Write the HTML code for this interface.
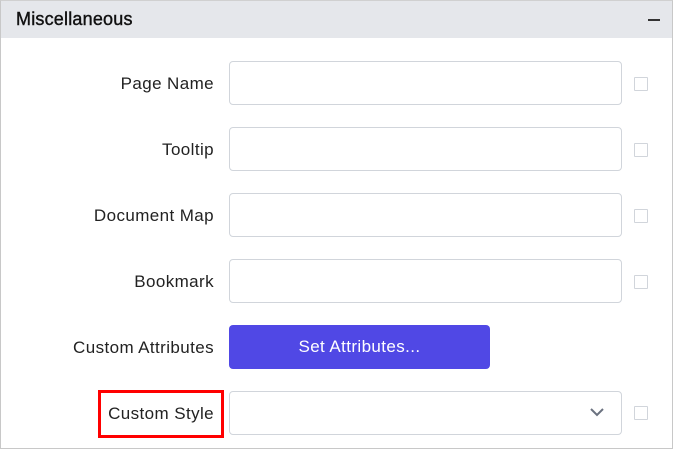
<!DOCTYPE html>
<html><head><style>
body{margin:0;width:673px;height:450px;background:#fff;font-family:"Liberation Sans",sans-serif;position:relative;overflow:hidden}
.frame{position:absolute;left:0;top:0;width:671px;height:447px;border:1px solid #c8c8c8;border-top-color:#d0d0d0}
.hdr{position:absolute;left:1px;top:1px;width:671px;height:37px;background:#e5e7eb}
.title{position:absolute;left:16px;top:9px;font-size:18px;color:#111;letter-spacing:0.2px;-webkit-text-stroke:0.4px #111}
.minus{position:absolute;left:648px;top:19px;width:12px;height:1.5px;background:#333}
.lbl{position:absolute;right:459px;font-size:17px;color:#222;white-space:nowrap;letter-spacing:0.4px}
.inp{position:absolute;left:229px;width:391px;height:42px;border:1px solid #d1d5db;border-radius:4px;background:#fff}
.cb{position:absolute;left:634px;width:12px;height:12px;border:1px solid #d1d5db;border-radius:1px}
.btn{position:absolute;left:229px;top:325px;width:261px;height:44px;background:#5048e5;border-radius:4px;color:#fff;font-size:17px;letter-spacing:0.4px;text-align:center;line-height:44px}
.red{position:absolute;left:98px;top:390px;width:120px;height:42px;border:3px solid #f00}
</style></head><body>
<div class="frame"></div>
<div class="hdr"></div>
<div class="title">Miscellaneous</div>
<div class="minus"></div>

<div class="lbl" style="top:74px">Page Name</div>
<div class="inp" style="top:61px"></div>
<div class="cb" style="top:77px"></div>

<div class="lbl" style="top:140px">Tooltip</div>
<div class="inp" style="top:127px"></div>
<div class="cb" style="top:143px"></div>

<div class="lbl" style="top:206px">Document Map</div>
<div class="inp" style="top:193px"></div>
<div class="cb" style="top:209px"></div>

<div class="lbl" style="top:272px">Bookmark</div>
<div class="inp" style="top:259px"></div>
<div class="cb" style="top:275px"></div>

<div class="lbl" style="top:338px">Custom Attributes</div>
<div class="btn">Set Attributes...</div>

<div class="red"></div>
<div class="lbl" style="top:404px">Custom Style</div>
<div class="inp" style="top:391px"></div>
<svg style="position:absolute;left:589px;top:406px" width="16" height="12" viewBox="0 0 16 12"><path d="M2 3 L8 9 L14 3" fill="none" stroke="#6b7280" stroke-width="2"/></svg>
<div class="cb" style="top:406px"></div>
</body></html>
